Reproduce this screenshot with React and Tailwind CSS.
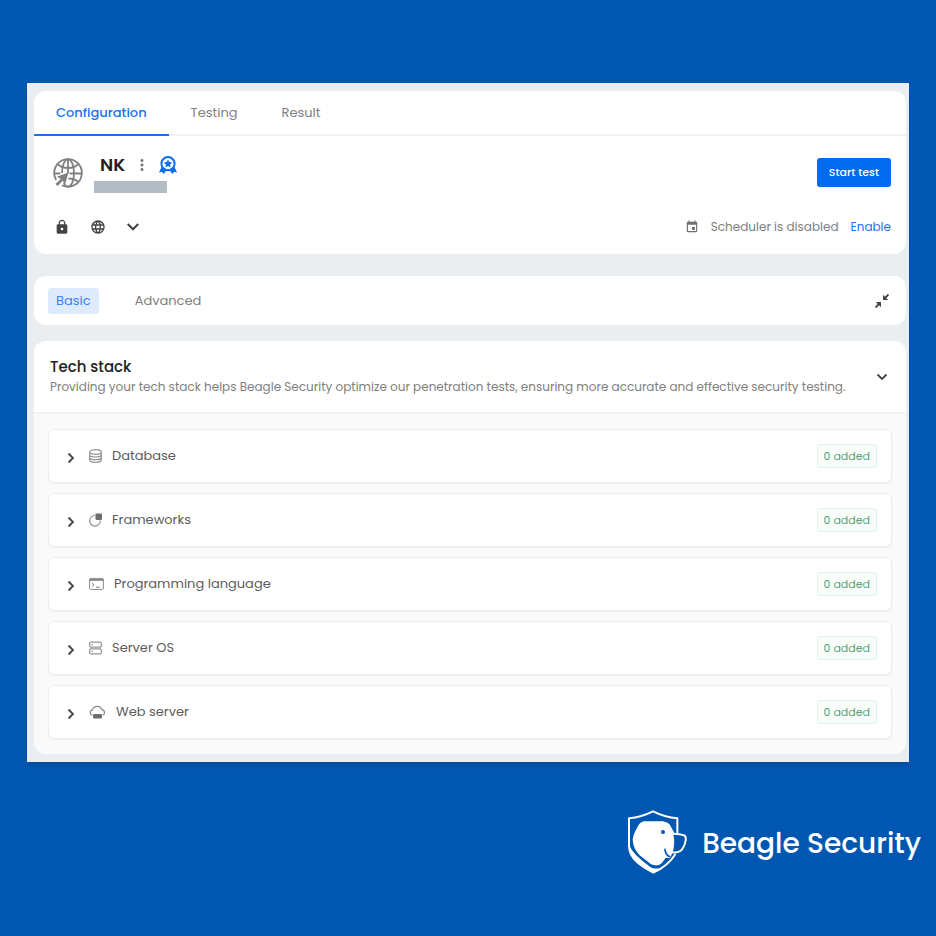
import { useState } from "react";
import { MdLock, MdMoreVert, MdEvent, MdLanguage } from "react-icons/md";

const Chevron = ({ className }) => (
  <svg
    viewBox="0 0 12 12"
    className={className}
    fill="none"
    stroke="currentColor"
    strokeWidth="1.8"
    aria-hidden="true"
  >
    <path d="M1.5 3.5 6 8l4.5-4.5" />
  </svg>
);

const SiteIcon = () => (
  <svg
    viewBox="0 0 30 30"
    className="w-[30px] h-[30px] shrink-0 text-[#808080]"
    fill="none"
    stroke="currentColor"
    strokeWidth="1.8"
    aria-hidden="true"
  >
    <path d="M3.2 22A13.8 13.8 0 1 1 9 27.3" />
    <path d="M9 15C9 7 11.8 1.3 15 1.3S21 7 21 15s-2.8 13.7-6 13.7c-1.8 0-3.2-1.4-4.2-4" />
    <path d="M4.500 6C7.500 9 11 10 15 10s7.500-1 10.500-4M1.300 15.500h6M16.500 15.500h12.200M15.500 20.500c4 0 7.500 1.500 10 3.500M15 1.300V15" />
    <path
      d="M15.5 14.5 3.8 18.7l4 2.200-5.300 5.100 2 2 5.300-5.300 2.200 3.800z"
      fill="currentColor"
      stroke="none"
    />
  </svg>
);

const BadgeIcon = () => (
  <svg
    viewBox="0 0 18 18"
    className="w-[18px] h-[18px] text-[#0b6ff0]"
    fill="none"
    stroke="currentColor"
    aria-hidden="true"
  >
    <path
      d="M3 10 0 16.2l3-.2 1.800 2 3-4.600zM15 10l3 6.200-3-.2-1.800 2-3-4.600z"
      fill="currentColor"
      stroke="none"
    />
    <circle cx="9" cy="7.6" r="6.6" fill="#fff" strokeWidth="2" />
    <path
      d="m9 3.400 1.300 2.700 2.900.4-2.100 2 .5 2.900L9 10l-2.600 1.400.5-2.900-2.100-2 2.900-.4z"
      fill="currentColor"
      stroke="none"
    />
  </svg>
);

const CollapseIcon = () => (
  <svg
    viewBox="0 0 14 14"
    className="w-[14px] h-[14px]"
    fill="none"
    stroke="currentColor"
    strokeWidth="1.8"
    aria-hidden="true"
  >
    <path d="M13.5.5 9.5 4.5M.5 13.5l4-4" />
    <path d="M8 .8v5.200h5.200zM6 13.200V8H.8z" fill="currentColor" stroke="none" />
  </svg>
);

const DatabaseIcon = () => (
  <svg
    viewBox="0 0 13 14"
    className="w-[13px] h-[14px] text-[#959595]"
    fill="none"
    stroke="currentColor"
    strokeWidth="1.2"
    aria-hidden="true"
  >
    <ellipse cx="6.5" cy="3" rx="5.8" ry="2.3" />
    <path d="M.7 3v8c0 1.300 2.600 2.300 5.800 2.300s5.800-1 5.800-2.300V3M.7 5.700c0 1.300 2.600 2.300 5.800 2.300s5.800-1 5.800-2.300M.7 8.400c0 1.300 2.600 2.300 5.800 2.300s5.800-1 5.800-2.300" />
  </svg>
);

const FrameworkIcon = () => (
  <svg
    viewBox="0 0 13 14"
    className="w-[13px] h-[14px] text-[#959595]"
    fill="none"
    stroke="currentColor"
    strokeWidth="1.2"
    aria-hidden="true"
  >
    <path d="M6.2 2.500A5.300 5.300 0 1 0 11.200 7.500" />
    <rect x="6.5" y=".6" width="6.5" height="6.5" rx="1" fill="#6e6e6e" stroke="none" />
  </svg>
);

const TerminalIcon = () => (
  <svg
    viewBox="0 0 15 14"
    className="w-[15px] h-[14px] text-[#8a8a8a]"
    fill="none"
    stroke="currentColor"
    aria-hidden="true"
  >
    <rect x=".6" y="1.6" width="13.8" height="10.8" rx="1" />
    <path d="M.6 2.800h13.800" strokeWidth="2.2" />
    <path d="m3 6 2 1.800-2 1.800M7 10.200h4" />
  </svg>
);

const ServerIcon = () => (
  <svg
    viewBox="0 0 13 14"
    className="w-[13px] h-[14px] text-[#959595]"
    fill="none"
    stroke="currentColor"
    strokeWidth="1.2"
    aria-hidden="true"
  >
    <rect x=".7" y="1.2" width="11.6" height="5" rx="1" />
    <rect x=".7" y="7.8" width="11.6" height="5" rx="1" />
    <path d="M2.500 3.700h1.500M2.500 10.300h1.500" />
  </svg>
);

const CloudIcon = () => (
  <svg
    viewBox="0 0 17 14"
    className="w-[17px] h-[14px] text-[#8a8a8a]"
    fill="none"
    stroke="currentColor"
    strokeWidth="1.2"
    aria-hidden="true"
  >
    <path d="M3.500 10.200a2.700 2.700 0 0 1 0-5.300A5 5 0 0 1 13 4.900a2.700 2.700 0 0 1 .5 5.300" />
    <rect x="4" y="9" width="9" height="4.5" rx="1.2" fill="#6e6e6e" stroke="none" />
  </svg>
);

const BeagleLogo = () => (
  <svg
    viewBox="12 9 180 192"
    className="w-[60px] h-[64px] shrink-0 text-white"
    fill="none"
    stroke="currentColor"
    strokeWidth="6"
    strokeLinejoin="round"
    strokeLinecap="round"
    aria-hidden="true"
  >
    <path d="M163 80V34Q124 30 90 13 56 30 18 34V118C20 156 54 178 91 197 122 182 142 166 156 143" />
    <path
      d="M18 112C26 136 50 156 78 177 86 184 96 186 112 184L91 197C54 178 20 156 18 112z"
      fill="currentColor"
      stroke="none"
    />
    <path
      d="M62 43H116Q132 46 140 62L151 82Q157 108 149 136L141 154 128 152 117 168Q106 180 84 172L50 145Q30 124 29 98 30 84 42 62 50 46 62 43z"
      fill="currentColor"
      stroke="none"
    />
    <path d="M118 46Q136 48 142 62L152 80Q172 80 184 85 190 90 188 100 184 122 172 132 162 138 148 136" />
    <path d="M126 127Q127 143 140 149" stroke="#0057b1" strokeWidth="5" />
    <circle cx="120" cy="75" r="6" fill="#0057b1" stroke="none" />
  </svg>
);

const tabs = ["Configuration", "Testing", "Result"];

const stackItems = [
  { label: "Database", icon: <DatabaseIcon />, count: 0 },
  { label: "Frameworks", icon: <FrameworkIcon />, count: 0 },
  { label: "Programming language", icon: <TerminalIcon />, count: 0 },
  { label: "Server OS", icon: <ServerIcon />, count: 0 },
  { label: "Web server", icon: <CloudIcon />, count: 0 },
];

const StackRow = ({ label, icon, count }) => (
  <li>
    <button
      type="button"
      className="flex w-full h-[54px] items-center rounded-md border border-[#eeeeee] bg-white pl-4 pr-[14px] text-left shadow-xs"
    >
      <Chevron className="w-3 h-3 mt-1 mr-3 -rotate-90 text-[#444444]" />
      {icon}
      <span className="ml-[10px] grow text-[13px] text-[#5c5c5c]">{label}</span>
      <span className="flex h-6 items-center rounded-[3px] border border-[#dff3e9] bg-[#f8fdfa] px-[6px] text-[11px] text-[#57a580]">
        {count} added
      </span>
    </button>
  </li>
);

export default function App() {
  const [activeTab, setActiveTab] = useState("Configuration");
  const [mode, setMode] = useState("Basic");

  return (
    <div className="min-h-screen bg-[#0057b1] pt-[83px] pb-[61px] font-['Poppins','Inter',sans-serif]">
      <main className="mx-[27px] bg-[#eaeef1] pt-2 pr-[3px] pb-2 pl-[7px] shadow-md">
        <section className="rounded-xl bg-white">
          <nav className="flex h-[45px] border-b-2 border-[#f0f1f2]">
            {tabs.map((tab) => (
              <button
                key={tab}
                type="button"
                onClick={() => setActiveTab(tab)}
                className={
                  activeTab === tab
                    ? "-mb-[2px] border-b-2 border-[#1574f0] px-[22px] text-[13px] font-medium text-[#1574f0]"
                    : "-mb-[2px] border-b-2 border-transparent px-[22px] text-[13px] text-[#808080]"
                }
              >
                {tab}
              </button>
            ))}
          </nav>

          <div className="flex items-center justify-between pt-4 pr-[15px] pl-[19px]">
            <div className="flex items-center">
              <SiteIcon />
              <div className="ml-[11px]">
                <div className="flex items-center pl-[6px] h-[25px]">
                  <h1 className="text-lg font-semibold text-[#222222]">NK</h1>
                  <button type="button" aria-label="More" className="ml-2">
                    <MdMoreVert className="w-[18px] h-[18px] text-[#777777]" />
                  </button>
                  <span className="ml-2">
                    <BadgeIcon />
                  </span>
                </div>
                <div className="mt-1 h-3 w-[73px] bg-[#b2bcc3]" />
              </div>
            </div>
            <button
              type="button"
              className="h-[29px] rounded-[3px] bg-[#006bee] px-3 text-[11px] font-medium text-white"
            >
              Start test
            </button>
          </div>

          <div className="flex items-center justify-between pt-[25px] pr-[15px] pb-[18px] pl-[20px]">
            <div className="flex items-center text-[#444444]">
              <MdLock className="w-4 h-4" />
              <MdLanguage className="ml-5 w-4 h-4" />
              <button type="button" aria-label="Show details" className="ml-5">
                <Chevron className="w-[14px] h-[14px]" />
              </button>
            </div>
            <div className="flex items-center text-xs leading-[18px]">
              <MdEvent className="w-[14px] h-[14px] text-[#707070]" />
              <span className="ml-3 text-[#808080]">Scheduler is disabled</span>
              <a href="#enable" className="ml-3 text-[#1574f0]">
                Enable
              </a>
            </div>
          </div>
        </section>

        <section className="mt-[22px] flex h-[49px] items-center rounded-xl bg-white pr-[17px] pl-[14px]">
          <button
            type="button"
            onClick={() => setMode("Basic")}
            className={
              mode === "Basic"
                ? "h-[26px] rounded-[3px] bg-[#deebfd] px-2 text-[13px] text-[#3a82f2]"
                : "h-[26px] px-2 text-[13px] text-[#808080]"
            }
          >
            Basic
          </button>
          <button
            type="button"
            onClick={() => setMode("Advanced")}
            className={
              mode === "Advanced"
                ? "ml-7 h-[26px] rounded-[3px] bg-[#deebfd] px-2 text-[13px] text-[#3a82f2]"
                : "ml-7 h-[26px] px-2 text-[13px] text-[#808080]"
            }
          >
            Advanced
          </button>
          <button type="button" aria-label="Collapse all" className="ml-auto text-[#444444]">
            <CollapseIcon />
          </button>
        </section>

        <section className="mt-4 rounded-xl bg-[#fafafa]">
          <div className="flex h-[73px] items-center justify-between rounded-t-xl border-b-2 border-[#f1f2f2] bg-white pr-[18px] pl-4">
            <div>
              <h2 className="text-[15px] leading-5 font-medium text-[#222222]">
                Tech stack
              </h2>
              <p className="text-xs leading-5 text-[#808080]">
                Providing your tech stack helps Beagle Security optimize our
                penetration tests, ensuring more accurate and effective security
                testing.
              </p>
            </div>
            <button type="button" aria-label="Toggle tech stack" className="text-[#444444]">
              <Chevron className="w-3 h-3" />
            </button>
          </div>
          <ul className="flex flex-col gap-[10px] px-[14px] py-[15px]">
            {stackItems.map((item) => (
              <StackRow key={item.label} {...item} />
            ))}
          </ul>
        </section>
      </main>

      <footer className="mt-12 flex items-center justify-end pr-[15px]">
        <BeagleLogo />
        <span className="ml-[15px] pt-1 text-[28px] font-medium text-white">
          Beagle Security
        </span>
      </footer>
    </div>
  );
}
